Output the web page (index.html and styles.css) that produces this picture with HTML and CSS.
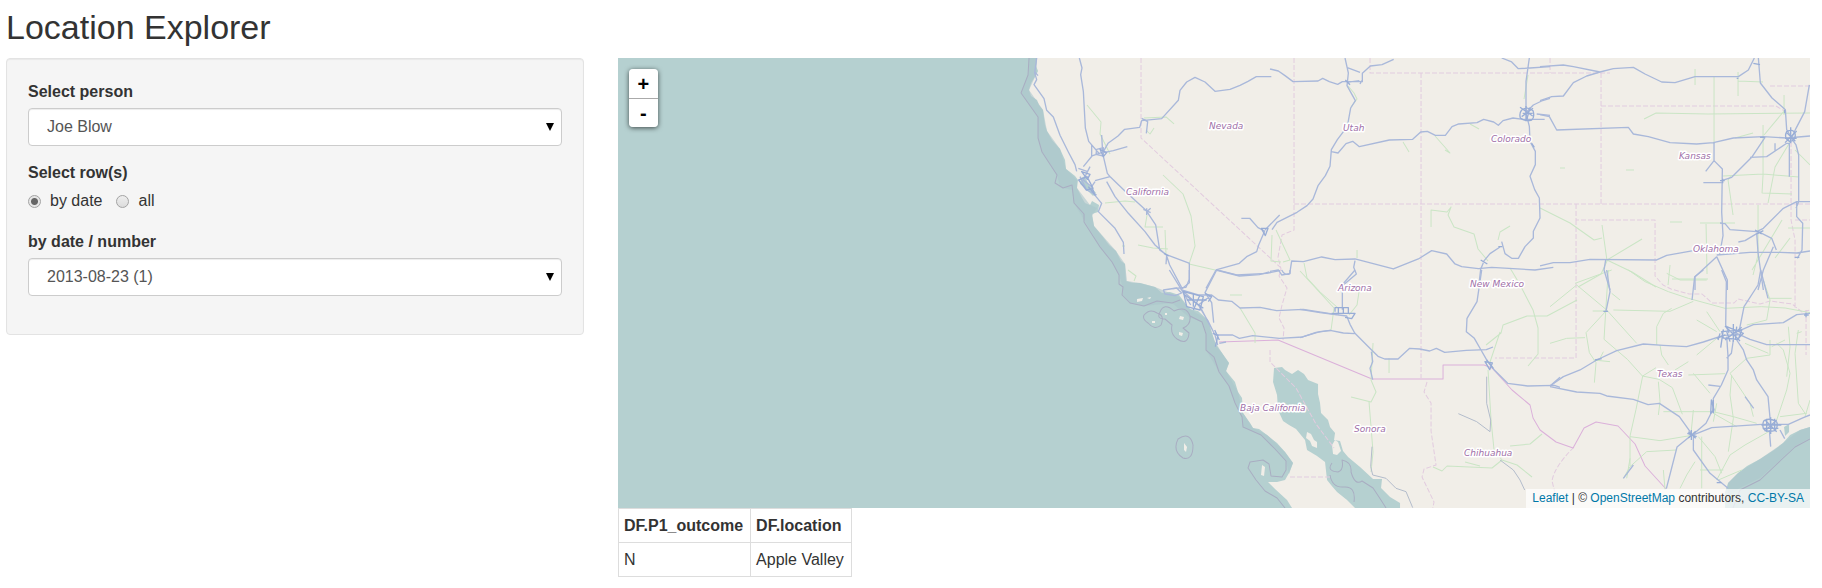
FILE: index.html
```html
<!DOCTYPE html>
<html lang="en">
<head>
<meta charset="utf-8">
<title>Location Explorer</title>
<link rel="stylesheet" href="styles.css">
</head>
<body>
<h1 class="title">Location Explorer</h1>
<main class="layout">
  <form class="panel">
    <div class="field">
      <label class="label" for="person">Select person</label>
      <div class="select-wrap"><select class="select" id="person"><option>Joe Blow</option></select></div>
    </div>
    <fieldset class="field rows">
      <legend class="label">Select row(s)</legend>
      <div class="radios">
        <label class="radio"><input type="radio" name="rows" checked>by date</label>
        <label class="radio"><input type="radio" name="rows">all</label>
      </div>
    </fieldset>
    <div class="field">
      <label class="label" for="date">by date / number</label>
      <div class="select-wrap"><select class="select" id="date"><option>2013-08-23 (1)</option></select></div>
    </div>
  </form>
  <section class="content">
    <div class="map">
      <svg class="tiles" viewBox="618 58 1192 450" preserveAspectRatio="xMidYMid slice" role="img" aria-label="Map of the southwestern United States">
        <rect class="land" x="618" y="58" width="1192" height="450"/>
        <!-- Pacific -->
        <path class="sea" d="M618 58H1037L1036 66 1038 71 1036 75 1031 83 1029 90 1031 96 1037 100 1039 105 1043 110 1044 118 1045 125 1047 131 1052 140 1060 149 1065 160 1066 169 1070 172 1075 176 1078 180 1077 188 1082 198 1085 203 1090 205 1092 201 1099 205 1098 212 1092 214 1094 226 1103 237 1109 245 1116 251 1121 261 1125 264 1126 281 1133 283 1140 283 1155 287 1162 293 1170 292 1179 295 1185 303 1190 309 1198 311 1208 320 1212 333 1216 345 1222 353 1229 363 1226 371 1235 382 1238 392 1242 398 1243 413 1250 423 1253 428 1259 429 1267 435 1277 443 1285 452 1293 463 1289 473 1285 480 1277 482 1268 482 1275 489 1287 500 1292 508H618Z"/>
        <path class="shelf" d="M1037 58L1036 75 1029 90 1043 110 1047 131 1060 149 1066 169 1077 180 1077 188 1090 205 1097 208 1092 216 1094 226 1116 251 1125 264 1127 281 1140 283 1155 287 1170 293 1179 297 1190 309 1208 320 1214 340 1222 353 1229 363 1226 371 1238 392 1243 413 1253 428 1267 435 1285 452 1293 463 1289 474 1286 461 1275 449 1261 435 1243 427 1242 417 1235 403 1228 385 1219 372 1206 350 1206 334 1202 322 1190 318 1172 303 1144 306 1130 303 1122 295 1123 288 1119 275 1112 262 1100 247 1084 220 1074 203 1072 190 1060 187 1057 175 1042 152 1038 138 1038 117 1021 93 1028 75 1029 58Z"/>
        <!-- Gulf of California -->
        <path class="sea" d="M1274 368L1282 367 1285 370 1292 374 1298 370 1304 374 1308 380 1318 384 1318 394 1320 403 1321 413 1328 420 1330 427 1335 433 1334 440 1340 441 1343 451 1348 457 1360 467 1373 479 1382 479 1381 488 1390 497 1400 503V508H1355L1347 500 1337 492 1331 485 1327 480 1325 462 1317 456 1307 450 1305 440 1296 429 1289 425 1283 421 1278 410 1277 395 1273 382Z"/>
        <g class="land">
          <path d="M1307 432l4 2 3 6 3 2v6l-5-2-2-5-4-3zM1335 440l3 2 3 9-4 4-4-1-1-9z"/>
          <path d="M1137 299l6-1-1 3-5 1zM1147 298l4-1-1 2zM1180 316l4 1-1 3-4-1zM1179 332l4 1-1 3-3-1zM1184 443l3 4-1 5-2-2zM1262 465l3 2-1 9-3-1zM1152 321h3v2h-3zM1165 313h2v2h-2z"/>
        </g>
        <!-- Gulf of Mexico -->
        <path class="sea" d="M1810 427L1800 430 1790 435 1783 443 1774 450 1760 459 1747 466 1738 473 1728 483 1725 492V508H1810Z"/>
        <path class="shelf" d="M1810 427L1800 430 1783 443 1760 459 1738 473 1728 483 1728 496 1740 488 1760 478 1780 460 1795 446 1810 438Z"/>
        <path class="sea" d="M1081 178l4-2 3 8 8 9-3 3-8-8-5-4zM1784 427l5-3v8l-4 4z"/>

        <!-- maritime limits -->
        <path class="limit" d="M1029 58L1028 75 1021 93 1038 117 1038 138 1042 152 1057 175 1055 183 1063 188 1072 185 1074 203 1084 214 1084 222 1100 247 1112 262 1119 275 1119 284 1123 287 1122 295 1130 303 1144 306 1157 301 1172 303 1180 300M1190 316L1202 322 1206 334 1206 350 1214 357 1219 372 1229 386 1235 403 1242 417 1243 427 1261 435 1275 449 1286 461 1286 470 1282 477 1271 476 1269 464 1263 460 1250 462 1248 468 1256 480 1265 491 1277 498 1285 508M1144 315q6-7 13-2 8 2 4 12-6 6-13-2-6-4-4-8zM1160 312q4-10 14-1 12-6 16 5 1 9-7 12l6 5q-1 13-12 6-7-5-5-14l-7-6q-9 0-5-7zM1178 439q12-8 15 6 0 16-10 13-11-7-5-19zM1332 463q-6 8 6 9 6-2 4-12 10 2 9 12 4 14 11 9l11 7q8 12 13 20M1330 475q2 13 14 12 12-1 10 15"/>
        <path class="limit" d="M1733 508L1740 490 1760 480 1780 461 1795 447 1810 439"/>

        <!-- state and national borders -->
        <g class="state">
          <path d="M1141 58V138L1281 268M1294 58V230l-12 5-4 22 3 12-2 7 8 12-5 17-3 13 5 10-1 12M1370 58V73H1610M1421 73V378M1294 204H1810M1601 73V204M1601 106H1776l10 6M1576 204V220H1655V276l8 9 8 4 18 5 13 0 10 9 22 0 4-4 22 5 10-3 22 3 10 8 19-5M1576 220V358H1495M1770 86H1810M1791 142V220l4 20V308M1806 310V355M1795 220H1810M1550 58V73"/>
          <path d="M1270 350v12l26 26 20 36 18 24M1290 477h40M1427 382l-3 10 7 11v28l5 34-12 4-2 8 12 25-2 10M1574 447q-20 20-22 34l5 20"/>
        </g>
        <path class="nation" d="M1219 342L1278 340 1372 379H1443V365H1484L1492 368 1512 390 1530 405 1533 418 1540 430 1556 442 1573 448 1584 428 1596 422 1618 426 1635 444 1645 466 1666 489"/>

        <!-- secondary roads -->
        <g class="minor">
          <path d="M1087 105l14 17-1 12 10 20M1105 203l20-2 10 1M1147 215l-2 12h18M1165 230l1 25M1163 175l20 19 8 22 4 30-6 18 26 6M1138 245l15 3 15 1M1125 246h-3M1128 270l8 6-2 5M1144 118l22-1 8 7M1146 130l4 4 4-6"/>
          <path d="M1276 230l14 30-7 2M1272 235l-1 26 10 1M1304 263l3 15 13 14 18 16M1357 250v8M1431 227v-17l16 2 4-5-3 8 6 12 20 7 4 15 10 12M1498 240l2-8 10-6M1435 136l15 17-5-3M1348 86l6 7 3 6-6 8M1528 75l-4 24M1510 268l9 15 14 27 5 18v26l-10 12M1403 142l6 10M1470 124l9 5M1540 208l30 15 24 17 8-2M1602 225l5 36-6 13-23 13M1607 260l35-21M1607 260l25 12 24 15"/>
          <path d="M1300 271l34 37-3 22M1360 285l-3 20-8 10M1240 308l15 25v10M1230 295h12M1373 343l-2 37 5 12-5 10-20-5M1369 402l4 50-2 20M1389 358v15M1486 345l15-12 2-8 24-9 20 0 30-16M1490 362l10-30M1488 370l3 50 3 30 8 10-10 8-45-2-5 5-9-4M1465 462l15 4M1502 460l15 5 15 12M1510 446l20-2 12-10"/>
          <path d="M1644 119l12-6 52 1 102-1M1714 77v67M1695 69v16M1738 72v24M1738 81l25 1M1764 135l20-24M1763 125v50l-1 18 30 1M1723 176l40-2 36 3M1733 215l-5-35 3-4M1700 223h35M1706 224l1 50M1672 279h36M1768 203l7-36 15-25M1758 205v50l-5 20M1775 258l15-20M1752 270l30-50M1670 265l-2 20M1735 138l18-5M1788 228h22M1810 165l-15-15M1784 95v20M1670 222h12M1560 168h5M1626 170h8"/>
        </g>
        <g class="minor minor-wide" transform="translate(1550 270) scale(.3333)">
          <path d="M80 0M0 110l80-65 90 75 90 100M75 40l110-40M168 123h-40M168 123l-60 65 10 60 20 30-5 60M175 0l-8 123-5 85 70 60 45 50 50 10 40 25 30 80M190 120l170 4 70-30M235 0l50 35 70 30 60 20 110 30 110-5 70 4 80 15M0 220l50-15 55-2M320 225l0-55 20-40 25-15M330 225l5 30 20 30M278 318l-20 100-18 80 0 90M278 318l40-25M325 335l5 60-5 40M375 300l40-25M415 315l110-4M430 310l50 60M240 500l90 12 90-15M220 625l20-35 50-45 90-5M430 420l-6 60M340 425l140 0M500 400l-10 55M445 500l50 60 20 50M545 315l-5 60 10 70-15 100M540 310l50-45 70-10 0-45M540 310l60 90 10 40M490 425l60 15 70 20M490 430l70 40M680 450l30-90 10-50-20-70-20-20M665 480l-80 45-45 30-40 75M455 500l0 155M340 600l5 60M435 575l-25 40-20 40M345 170M715 170l5 60-10 90M745 180l-10 70 10 150 20 30M690 440l80-10M640 30l20 60-10 60-60 15M440 150l60 35M470 125l40 60M440 255l60-50M655 85h70M555 490M765 440l15-50M350 10l40 20h80M575 600l-70 30M450 600h70M755 185l-15 5M705 210l-40 20M585 220l70 30M130 270l50 5M150 265l10-20M185 70l25 20M230 625l10-60"/>
        </g>
        <!-- northern California and Nevada -->
        <g class="road" transform="translate(1000 50) scale(.3333)">
          <path d="M110 24l-6 45 6 20-8 15 30 42 8 35 20 20 20 55 25 50 20 38 5 20M238 24l8 30-4 20 8 50 6 110 10 40 30 35M310 305l14-25 30-22 20-20 45-6 6-20 60-6 50-55 5-30 20-25 25-14 30 14 30 28 45-6 30-12 24-12 25-14 45 0M310 308l30-6 42-12M305 255l3 55 14 60 10 12 45 43 60 55 30 45 12 75 20 14 70 26M250 350l26-32 35-12M275 285v35M290 298l20-5v25l-22-5zM240 380l20 40 30 15M235 355l28 10M285 392l45-12M270 350l-20 40 25 20 10-15M320 395l25 45 40 50 50 55 30 40 34 30 10 30 36 68M500 615l-2 28M280 430l25 30-10 25 50 50 25 42 2 35M568 640l0 48-10 24-40 4M618 715l30-55 70-20 22-20 30-15 6-20 18-42-20-10-25-28-25 0M795 540l44-45M650 660l60 15 90-5 40-8M440 485l12-10M425 205l18 10-4 35M104 65l10 12M440 475l0 20M430 478l22 10"/>
          <path class="town" d="M236 390l25-10 18 35-20 5zM300 298l20 10-10 12zM245 365l25 8-8 15zM265 410l20 25-12-30M784 535l20 0-8 22zM492 610l14 8"/>
        </g>
        <!-- Utah, Colorado and northern New Mexico -->
        <g class="road" transform="translate(1270 50) scale(.3333)">
          <path d="M0 57l25 6 20 14 24 18 75-2 14-8 20 10 25 8 14-8 60 0 0 -25 24-22 35-4 35-16M225 24l10 45-4 38 25 45-14 22-10 55-30 40-18 30-4 50-14 28-22 30-15 40-18 20-30 20-60 30-15 22M230 52l40 15M275 92l-5 10M184 305l20 4 24-28 20-7 20 16 90-20 70-2 24-22 20-2 24 12 30 0 20-26 20-8 55-4 20-10 30 8 14 10 14-14 30-8 30 4 65 0M695 24l30 12 20 20 35-2 60-4M778 24l-10 70 0 95 10 40 2 45 16 30 0 40-16 35 14 40 14 25 2 60-20 40 0 20-25 26-20 35-20 0-20-14-10-36M770 185l20-20 25-12 25-8M800 192l40 4M0 664l25-4 10 15 24-4 6-38 35 2 55-14 40 8 60-2 115 30 75-30 40-25 45 10 25 30 20 8 50 6 40-4 130 8 55-8M255 632l-4 20 8 20-40 34M640 635l20-24 30-20M640 638l-8 20-4 35M230 97l38-5"/>
          <path class="town" d="M755 180q18-12 34 2 6 20-4 28-20 6-34-6-4-14 4-24zM758 190h30M768 168v42M780 172l-10 38M632 630l20 12M226 90l14 14M755 200l34-25M750 172l38 26M785 280l8 12M685 590l12 0"/>
        </g>
        <!-- Great Plains -->
        <g class="road" transform="translate(1540 50) scale(.3333)">
          <path d="M0 50l70-5 30 5 80 16 40-10 60-4 35 20 50 24 40 2 60-18 130 0 30-20 18-36M0 152l35-12 35-2 30-40 40-20 40-12M655 24l6 75 35 45 40 35 4 60 12 20M0 194l28 6 22 40 215-8 15 20 45 8 65 18 80 4 50-4 60-14 90-4 70 4 70-6M808 105l-14 80-26 50-14 30 14 20 8 30 0 140-8 20M522 277v55l25 25-2 130 4 70-10 55M522 332l-25 32M545 392l30-10 60-60 40-60M630 322l50-2 60-40 8 0 0 100M490 398h55M705 280v25M810 455h-40l-40 20-60 60-20 10-80-6-15-18-15-2M655 545l40 20 14 35M770 455l0 45 18 20-2 80-14 25M655 548l-40 24-20 4M0 648l40-10 50 0 60-10 200 2 30-14 80-14 30 0M530 615l100-8 90 0 50 2 40-6M650 548l4 60 16 112M700 590l-30 70-16 60M530 620l-65 60 0 40M530 620l32 70 0 30M197 630l-5 30 18 60"/>
          <path class="town" d="M740 245q18-10 25 5 4 20-15 25-20-10-10-30zM735 265l35 0M752 232v48M735 278l35-35M740 248l26 26M645 540l20 12M650 552l20-10M540 392h14M548 386v14M640 40l20 4M660 262h14M734 180v10M764 622h14M590 85h5"/>
        </g>
        <!-- southern California -->
        <g class="road" transform="translate(1090 270) scale(.3333)">
          <path d="M238 0l34 55 30 50M220 60l40-6 15 15-20 8-30-5zM275 60l50 15 40 0 20 15 40 4 25 20 60-2 50 10 80-4 100 16M298 0v38l-24 20M380 0l-35 68 20 30 6 60M378 0l70 18 60-4 30-8M575 0q10 20 25 10l0-10M365 75l-40 30 30 50 20 40 8 30M378 195l50 0 20 10 40-8 80 8 70-4 40-14 45-6M388 220l20-4M270 55l60 55 40 75"/>
          <path class="town" d="M280 65l60 15-10 40-40-10zM290 90h60M310 70v40M285 75l55 40M330 75l-20 45M345 70l20 10-10 15M368 190l16 6-8 34M374 180l14 30"/>
        </g>
        <!-- Arizona, New Mexico and northern Mexico -->
        <g class="road" transform="translate(1300 270) scale(.3333)">
          <path d="M165 0l-38 44 0 75M0 118l60 10 80 10 10 25 14 26 50 50 20 20 20 8 40 0 35-32 30 2 30 6 20-8 25 12 65-6 60-2 20-8M0 203l60-18 30-4 40 8 34 2M214 245l4 30-8 20 8 34M545 0l-14 95-30 50-2 40 24 20 20 35 20 35 20 25 40 40 60 8 80-2 17 6M750 348l30-26"/>
          <path class="town" d="M105 125v-12h40v18M115 115v18M130 113v18M95 130h50l20 0-10 16-20-4M555 275l22 4-8 20zM560 270l20 25"/>
          <path class="dim" d="M560 320v80l12 50-2 35-40-30-55-24M216 530l-4 60 6 25 40 10 30 30 30 10 20 48M600 570l40 30 20 30 14 30"/>
        </g>
        <!-- Texas -->
        <g class="road" transform="translate(1550 270) scale(.3333)">
          <path d="M170 0l10 65-12 58M515 0l14 35-2 130 10 25M460 0l-26 20-8 70M632 0l22 85M632 0l-8 45-42 65-14 70M550 190l60-26 90-6 40-24 40-4M0 348l40-28 50-20 50-30 60-28 80-20 60 4 70 4 50-14 60-20 50-2M560 190l40 18 50 16 130 0M0 350l80 16 70 4 20 8 80 10 44 16 34-4 60 40 36 50M530 200l4 60 0 40-20 45-24 40-2 35-20 40-40 34M550 210l-6 40-14 15M560 210l20 30 10 30 20 30 10 30 34 50 8 85M430 495l55-22 150-10 80 0 45-20 20-8M425 495l-44 36-32 125M430 500l0 40 50 70 54 45M475 345l35 4M690 480l14 26M658 480l4 50M585 380l26 35M220 625l30-40"/>
          <path class="town" d="M515 185l60-5-10 28-45-4zM525 168l45 45M550 162v53M575 172l-50 38M500 205l26-10M530 185l10 30M560 170l-4 40M510 190l-6 20M520 178l-8 55M530 170l50 20-20 20M642 452q20-10 38 4 6 14-6 26-24 6-34-6-4-16 2-24zM650 446v40M662 442v50M674 446v36M634 465h60M640 475h45M645 450l35 35M680 450l-36 34M412 490l28 10M424 480v30M415 485l22 20M437 484l-22 20M484 390l8 30-10 10zM490 390v40M160 124h14M762 135h14M768 128v14M500 638h14M135 270l20-4"/>
        </g>

        <g class="places">
          <text x="1209" y="129">Nevada</text>
          <text x="1126" y="195">California</text>
          <text x="1343" y="131">Utah</text>
          <text x="1491" y="142">Colorado</text>
          <text x="1679" y="159">Kansas</text>
          <text x="1693" y="252">Oklahoma</text>
          <text x="1338" y="291">Arizona</text>
          <text x="1470" y="287">New Mexico</text>
          <text x="1657" y="377">Texas</text>
          <text x="1240" y="411">Baja California</text>
          <text x="1354" y="432">Sonora</text>
          <text x="1464" y="456">Chihuahua</text>
        </g>
      </svg>
      <div class="zoom">
        <button type="button" aria-label="Zoom in">+</button>
        <button type="button" aria-label="Zoom out">-</button>
      </div>
      <div class="credit"><a href="#">Leaflet</a> | © <a href="#">OpenStreetMap</a> contributors, <a href="#">CC-BY-SA</a></div>
    </div>
    <table class="data">
      <thead><tr><th>DF.P1_outcome</th><th>DF.location</th></tr></thead>
      <tbody><tr><td>N</td><td>Apple Valley</td></tr></tbody>
    </table>
  </section>
</main>
</body>
</html>
```
FILE: styles.css
```css
* { box-sizing: border-box; }

body {
  margin: 0;
  padding: 7px 12px 12px 6px;
  background: #fff;
  color: #333;
  font: 16px/22px "Liberation Sans", Arial, sans-serif;
}

.title {
  margin: 0 0 11px;
  font-size: 34px;
  line-height: 40px;
  font-weight: 400;
}

.layout {
  display: grid;
  grid-template-columns: 16fr 33fr;
  gap: 34px;
  align-items: start;
}

.content { min-width: 0; }

.panel {
  padding: 22px 21px;
  background: #f5f5f5;
  border: 1px solid #e3e3e3;
  border-radius: 4px;
  box-shadow: inset 0 1px 1px rgba(0, 0, 0, .05);
}

.field {
  margin: 0 0 16px;
  padding: 0;
  border: 0;
}

.label {
  display: block;
  margin-bottom: 5px;
  padding: 0;
  font-weight: 700;
}

.rows .label { margin-bottom: 6px; }

.select-wrap { position: relative; }

.select-wrap::after {
  content: "";
  position: absolute;
  right: 8px;
  top: 15px;
  border: 4px solid transparent;
  border-top: 8px solid #000;
  border-bottom: 0;
  pointer-events: none;
}

.select {
  display: block;
  width: 100%;
  height: 38px;
  padding: 0 18px;
  appearance: none;
  background: #fff;
  border: 1px solid #ccc;
  border-radius: 4px;
  box-shadow: inset 0 1px 1px rgba(0, 0, 0, .075);
  color: #555;
  font: inherit;
}

.radios {
  display: flex;
  gap: 14px;
  padding-bottom: 3px;
}

.radio {
  display: flex;
  align-items: center;
  gap: 9px;
}

.radio input {
  width: 13px;
  height: 13px;
  margin: 0;
  appearance: none;
  border: 1px solid #a3a3a3;
  border-radius: 50%;
  background: linear-gradient(#eee, #dcdcdc);
}

.radio input:checked {
  background: radial-gradient(circle, #666 3px, #e6e6e6 4px);
}

.map {
  position: relative;
  height: 450px;
  overflow: hidden;
  background: #b5d0d0;
}

.tiles { display: block; width: 100%; height: 100%; }
.land { fill: #f1eee8; }
.sea { fill: #b5d0d0; }
.shelf { fill: #abc6cc; opacity: .6; }

.limit, .state, .nation, .minor, .road { fill: none; stroke-linejoin: round; }
.limit { stroke: #a9adc2; stroke-width: 1; }
.state { stroke: #e2cbdf; stroke-width: 1; stroke-dasharray: 5 2; }
.nation { stroke: #dbb0da; stroke-width: 1; }
.minor { stroke: #cae5c5; stroke-width: 1; }
.minor-wide { stroke-width: 3; }
.road { stroke: #a9b8da; stroke-width: 4; }
.town { stroke: #98add6; stroke-width: 4; }
.dim { stroke: #b3bccb; stroke-width: 3; }

.places {
  fill: #a070a8;
  stroke: #fff;
  stroke-width: 3px;
  stroke-linejoin: round;
  paint-order: stroke;
  font: italic 9px "DejaVu Sans", sans-serif;
}

.zoom {
  position: absolute;
  left: 11px;
  top: 11px;
  display: grid;
  border-radius: 4px;
  overflow: hidden;
  box-shadow: 0 1px 5px rgba(0, 0, 0, .65);
}

.zoom button {
  width: 29px;
  height: 29px;
  padding: 0;
  border: 0;
  background: #fff;
  color: #000;
  font: bold 20px/28px "Liberation Sans", Arial, sans-serif;
}

.zoom button + button { border-top: 1px solid #aaa; }

.credit {
  position: absolute;
  right: 0;
  bottom: 0;
  padding: 0 6px;
  background: rgba(255, 255, 255, .7);
  font-size: 12px;
  line-height: 19px;
}

.credit a { color: #0078a8; text-decoration: none; }

.data { border-collapse: collapse; }

.data th,
.data td {
  padding: 5px 7px 5px 5px;
  border: 1px solid #ddd;
  line-height: 23px;
  text-align: left;
}
```
